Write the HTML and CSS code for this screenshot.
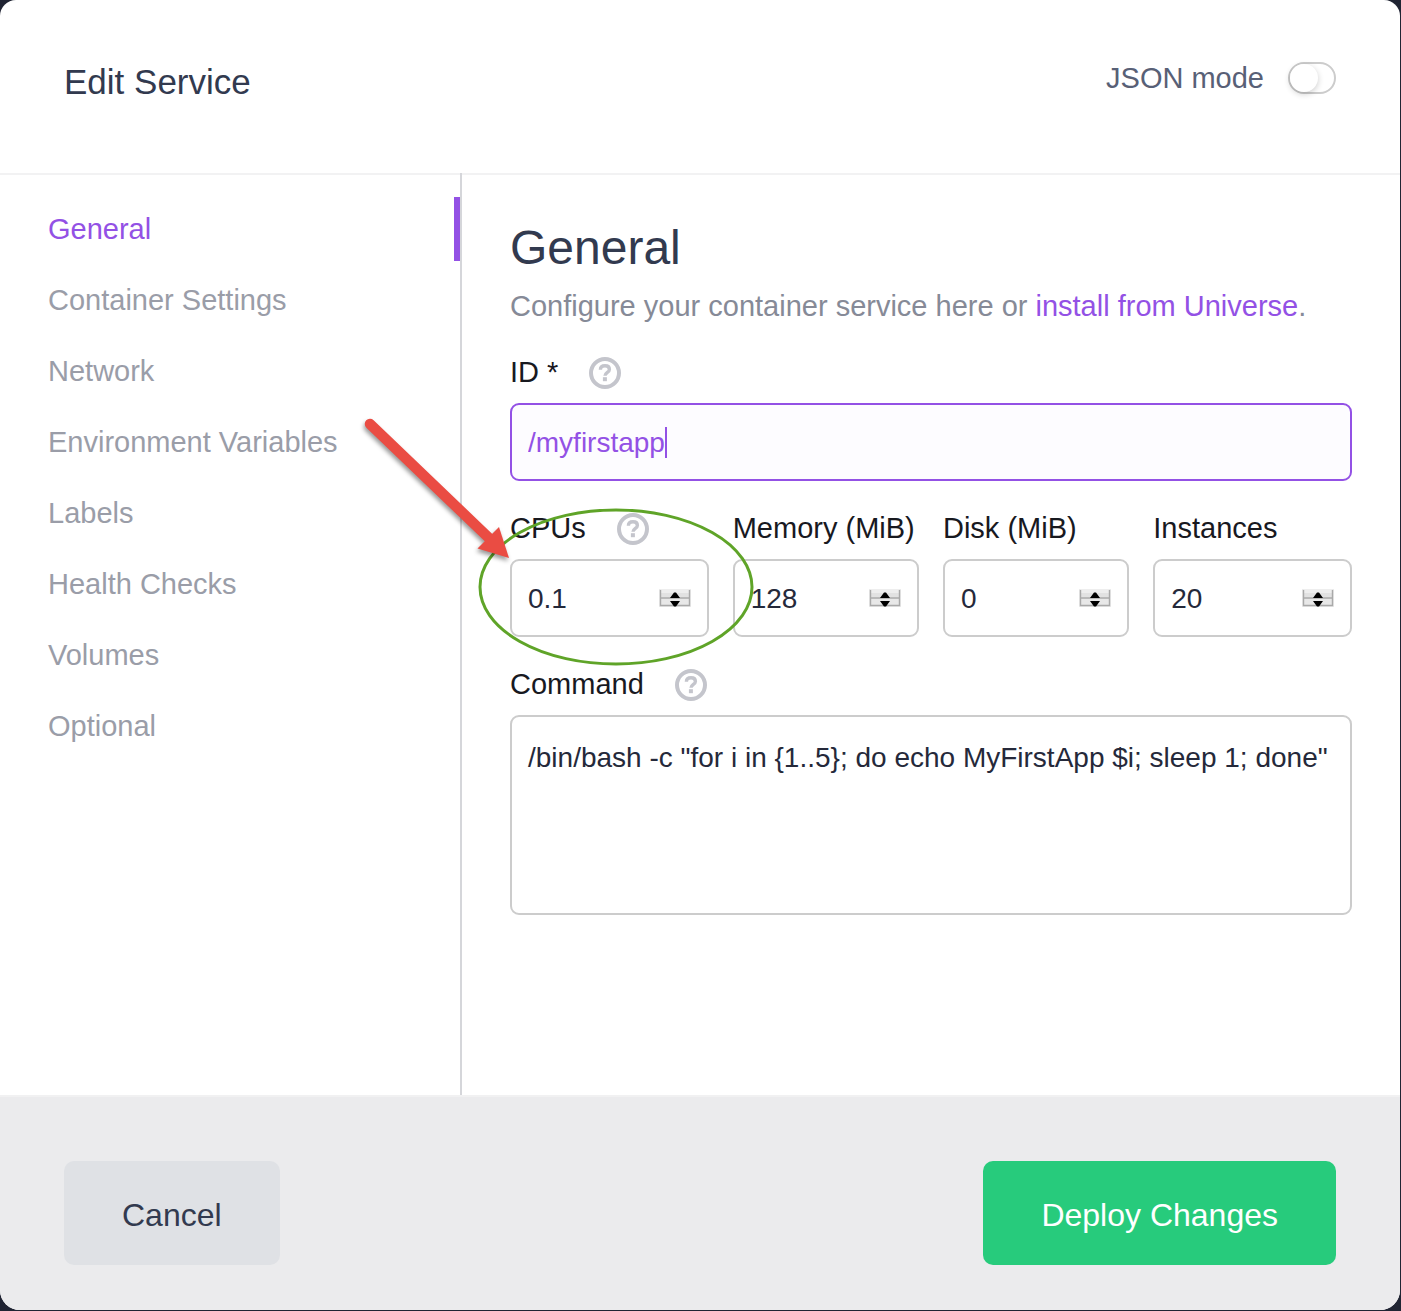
FILE: index.html
```html
<!DOCTYPE html>
<html lang="en">
<head>
    <meta charset="UTF-8">
    <meta content="width=device-width, initial-scale=1.0" name="viewport">
    <title>Edit Service</title>
    <link rel="stylesheet" href="styles.css">
</head>
<body>
<svg class="symbols" aria-hidden="true">
    <symbol id="icon-help" viewBox="0 0 32 32">
        <circle cx="16" cy="16" r="14" fill="none" stroke="#c4c5cc" stroke-width="4"/>
        <path d="M11.4 12.8C11.4 10.2 13.3 8.7 16 8.7C18.7 8.7 20.4 10.2 20.4 12.4C20.4 15.3 16 15.3 16 18.8" fill="none" stroke="#c4c5cc" stroke-width="3.4"/>
        <path d="M13.9 20.2h4v4h-4z" fill="#c4c5cc"/>
    </symbol>
    <symbol id="icon-spinner" viewBox="0 0 32 18">
        <path d="M0 0h32v18H0z" fill="#ebebeb"/>
        <path d="M2 0h28v8H2z" fill="#eeeeee"/>
        <path d="M2 4h28v4H2z" fill="#e2e2e2"/>
        <path d="M2 10h28v6H2z" fill="#e8e8e8"/>
        <path d="M1.5 1v15.5h29V1M1.5 9h29" fill="none" stroke="#a9a9a9" stroke-width="1.4"/>
        <path d="M11 9L15 3.500h2L21 9zM11 12L15 17.500h2L21 12z" fill="#000"/>
    </symbol>
</svg>

<form class="modal">
    <header class="modal-header">
        <h1>Edit Service</h1>
        <label class="json-mode">
            JSON mode
            <input type="checkbox" class="toggle">
        </label>
    </header>

    <div class="modal-body">
        <nav class="tabs">
            <a class="tab active" href="#general">General</a>
            <a class="tab" href="#container">Container Settings</a>
            <a class="tab" href="#network">Network</a>
            <a class="tab" href="#environment">Environment Variables</a>
            <a class="tab" href="#labels">Labels</a>
            <a class="tab" href="#health">Health Checks</a>
            <a class="tab" href="#volumes">Volumes</a>
            <a class="tab" href="#optional">Optional</a>
        </nav>

        <main class="content" id="general">
            <h2>General</h2>
            <p class="intro">Configure your container service here or <a href="#universe">install from Universe</a>.</p>

            <div class="fields">
                <div class="field">
                    <div class="field-label">
                        <label for="service-id">ID *</label>
                        <svg class="help"><use href="#icon-help"/></svg>
                    </div>
                    <div class="control">
                        <input type="text" id="service-id" class="input focused" value="/myfirstapp">
                        <span class="caret"></span>
                    </div>
                </div>

                <div class="field-row">
                    <div class="field annotated">
                        <div class="field-label">
                            <label for="cpus">CPUs</label>
                            <svg class="help"><use href="#icon-help"/></svg>
                        </div>
                        <div class="control">
                            <input type="number" id="cpus" class="input" step="0.1" value="0.1">
                            <svg class="spinner"><use href="#icon-spinner"/></svg>
                        </div>
                        <svg class="annotation" viewBox="0 0 420 280" aria-hidden="true">
                            <ellipse cx="266" cy="184" rx="136" ry="77" fill="none" stroke="#5fa428" stroke-width="3"/>
                            <g class="arrow" fill="#ea4c43">
                                <path d="M20 21L140 136" stroke="#ea4c43" stroke-width="10.5" stroke-linecap="round"/>
                                <path d="M159 155L127.500 145.500L149 124z"/>
                            </g>
                        </svg>
                    </div>
                    <div class="field">
                        <div class="field-label">
                            <label for="memory">Memory (MiB)</label>
                        </div>
                        <div class="control">
                            <input type="number" id="memory" class="input" value="128">
                            <svg class="spinner"><use href="#icon-spinner"/></svg>
                        </div>
                    </div>
                    <div class="field">
                        <div class="field-label">
                            <label for="disk">Disk (MiB)</label>
                        </div>
                        <div class="control">
                            <input type="number" id="disk" class="input" value="0">
                            <svg class="spinner"><use href="#icon-spinner"/></svg>
                        </div>
                    </div>
                    <div class="field">
                        <div class="field-label">
                            <label for="instances">Instances</label>
                        </div>
                        <div class="control">
                            <input type="number" id="instances" class="input" value="20">
                            <svg class="spinner"><use href="#icon-spinner"/></svg>
                        </div>
                    </div>
                </div>

                <div class="field">
                    <div class="field-label">
                        <label for="command">Command</label>
                        <svg class="help"><use href="#icon-help"/></svg>
                    </div>
                    <textarea id="command" class="input" spellcheck="false">/bin/bash -c "for i in {1..5}; do echo MyFirstApp $i; sleep 1; done"</textarea>
                </div>
            </div>
        </main>
    </div>

    <footer class="modal-footer">
        <button type="button" class="button">Cancel</button>
        <button type="submit" class="button button-success">Deploy Changes</button>
    </footer>
</form>
</body>
</html>
```
FILE: styles.css
```css
* {
    box-sizing: border-box;
}

body {
    margin: 0;
    padding: 0 1px 1px 0;
    min-height: 100vh;
    display: flex;
    background-color: #202433;
    font-family: "Liberation Sans", Arial, sans-serif;
    font-size: 29px;
    line-height: 32px;
}

.symbols {
    position: absolute;
    width: 0;
    height: 0;
}

.modal {
    flex: 1;
    display: flex;
    flex-direction: column;
    background: #fff;
    border-radius: 16px 16px 20px 20px;
    overflow: hidden;
}

.modal-header {
    display: flex;
    justify-content: space-between;
    align-items: flex-start;
    padding: 62px 64px 71px;
}

h1 {
    margin: 0;
    font-size: 35px;
    line-height: 40px;
    font-weight: normal;
    color: #323a4f;
}

.json-mode {
    display: flex;
    align-items: center;
    gap: 24px;
    color: #586076;
}

.toggle {
    appearance: none;
    width: 48px;
    height: 32px;
    margin: 0;
    border: 2px solid #ccc;
    border-radius: 16px;
}

.toggle::before {
    content: "";
    display: block;
    width: 28px;
    height: 28px;
    border-radius: 50%;
    background: #fff;
    box-shadow: 0 2px 6px rgba(0, 0, 0, 0.2);
}

.modal-body {
    flex: 1;
    display: flex;
    background: linear-gradient(#f2f2f3, #f2f2f3) top / 100% 2px no-repeat;
}

.tabs {
    flex: 0 0 33%;
    display: flex;
    flex-direction: column;
    gap: 7px;
    padding-top: 24px;
    border-right: 2px solid #d5d6da;
}

.tab {
    padding: 16px 0 16px 48px;
    border-right: 6px solid transparent;
    color: #9a9da8;
    text-decoration: none;
}

.tab.active {
    border-color: #9351e5;
    color: #9351e5;
}

.content {
    flex: 1;
    min-width: 0;
    padding: 47px 48px 48px;
}

h2 {
    margin: 0;
    font-size: 48px;
    line-height: 56px;
    font-weight: normal;
    color: #323a4f;
}

.intro {
    margin: 14px 0 35px;
    color: #868a97;
}

.intro a {
    color: #9351e5;
    text-decoration: none;
}

.fields {
    display: flex;
    flex-direction: column;
    gap: 32px;
}

.field-row {
    display: grid;
    grid-template-columns: 16fr 15fr 15fr 16fr;
    gap: 24px;
}

.field-label {
    display: flex;
    align-items: flex-start;
    gap: 31px;
    min-height: 32px;
    margin-bottom: 14px;
    color: #18191f;
    line-height: 30px;
    white-space: nowrap;
}

.help {
    width: 32px;
    height: 32px;
}

.control {
    position: relative;
}

.input {
    display: block;
    width: 100%;
    height: 78px;
    padding: 2px 16px 0;
    border: 2px solid #ccc;
    border-radius: 9px;
    background: #fff;
    color: #25293a;
    font-family: inherit;
    font-size: 28px;
    line-height: 32px;
    outline: none;
}

.input.focused {
    border-color: #9351e5;
    background: #fdfcff;
    color: #9351e5;
}

.input[type="number"] {
    appearance: textfield;
}

textarea.input {
    height: 200px;
    padding: 25px 16px;
    resize: none;
}

.caret {
    position: absolute;
    top: 24px;
    left: 155px;
    width: 2px;
    height: 31px;
    background: #9351e5;
}

.spinner {
    position: absolute;
    top: 30px;
    right: 18px;
    width: 32px;
    height: 18px;
}

/* callout drawn over the CPUs field */
.annotated {
    position: relative;
}

.annotation {
    position: absolute;
    top: -110px;
    left: -160px;
    width: 420px;
    height: 280px;
    z-index: 1;
    pointer-events: none;
}

.arrow {
    filter: drop-shadow(-1px 3px 2px rgba(0, 0, 0, 0.4));
}

.modal-footer {
    display: flex;
    justify-content: space-between;
    padding: 64px 64px 45px;
    border-top: 2px solid #f1f1f2;
    background: #ebebed;
}

.button {
    height: 104px;
    padding: 4px 58px 0;
    border: 0;
    border-radius: 10px;
    background: #dfe1e5;
    color: #323a4f;
    font-family: inherit;
    font-size: 32px;
}

.button-success {
    background: #27cb7c;
    color: #fff;
}
```
